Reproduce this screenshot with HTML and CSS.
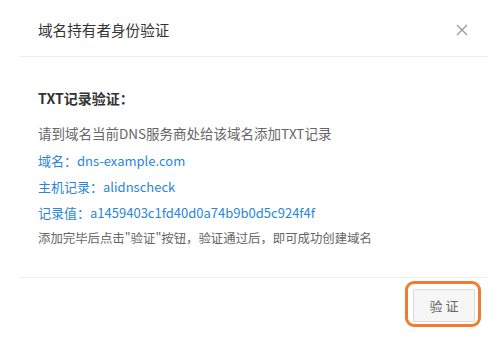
FILE: index.html
```html
<!DOCTYPE html>
<html lang="zh-CN">
<head>
<meta charset="utf-8">
<title>域名持有者身份验证</title>
<link rel="stylesheet" href="styles.css">
</head>
<body>
<div class="dialog">
  <div class="header">
    <div class="title">域名持有者身份验证</div>
    <svg class="close" width="12" height="12" viewBox="0 0 12 12" aria-label="关闭">
      <path d="M1 1 L11 11 M11 1 L1 11" stroke="#9a9a9a" stroke-width="1.3" fill="none"/>
    </svg>
  </div>
  <div class="body">
    <div class="heading">TXT记录验证<span class="p">：</span></div>
    <div class="hint">请到域名当前DNS服务商处给该域名添加TXT记录</div>
    <div class="rec first">域名<span class="p">：</span>dns-example.com</div>
    <div class="rec">主机记录<span class="p">：</span>alidnscheck</div>
    <div class="rec">记录值<span class="p">：</span>a1459403c1fd40d0a74b9b0d5c924f4f</div>
    <div class="note">添加完毕后点击"验证"按钮<span class="p">，</span>验证通过后<span class="p">，</span>即可成功创建域名</div>
  </div>
  <div class="footer">
    <button class="btn">验 证</button>
  </div>
</div>
</body>
</html>
```

FILE: styles.css
```css
html, body {
  margin: 0;
  padding: 0;
  background: #ffffff;
}
body {
  font-family: "Noto Sans CJK SC", sans-serif;
  color: #333;
}
.p {
  font-family: "Noto Sans CJK TC", sans-serif;
}
.dialog {
  width: 499px;
  height: 340px;
  box-sizing: border-box;
  padding: 0 12px 0 20px;
  display: flex;
  flex-direction: column;
}
.header {
  height: 57px;
  box-sizing: border-box;
  padding: 3px 19px 0 18px;
  border-bottom: 1px solid #ebedf0;
  display: flex;
  align-items: center;
  justify-content: space-between;
}
.title {
  font-size: 14.6px;
  line-height: 18px;
  color: #333;
}
.close {
  display: block;
  margin-top: 1px;
}
.body {
  padding: 31px 18px 27px 18px;
  border-bottom: 1px solid #ebedf0;
}
.heading {
  font-size: 14px;
  font-weight: bold;
  line-height: 20px;
  color: #333;
  margin-bottom: 12px;
}
.hint {
  font-size: 13.5px;
  line-height: 26px;
  color: #666;
}
.rec {
  font-size: 13px;
  line-height: 26px;
  color: #2b86d8;
}
.rec.first {
  margin-top: 2px;
}
.note {
  font-size: 12.4px;
  line-height: 24px;
  color: #666;
}
.footer {
  display: flex;
  justify-content: flex-end;
  padding: 11px 12px 0 0;
}
.btn {
  position: relative;
  width: 62px;
  height: 33px;
  box-sizing: border-box;
  border: 1px solid #dcdcdc;
  background: #f6f6f6;
  color: #666;
  font-family: "Noto Sans CJK SC", sans-serif;
  font-size: 13px;
  padding: 0;
  border-radius: 1px;
}
.btn::after {
  content: "";
  position: absolute;
  top: -9px;
  left: -9px;
  right: -7px;
  bottom: -6px;
  border: 3px solid #ed7d31;
  border-radius: 9px;
}
```
